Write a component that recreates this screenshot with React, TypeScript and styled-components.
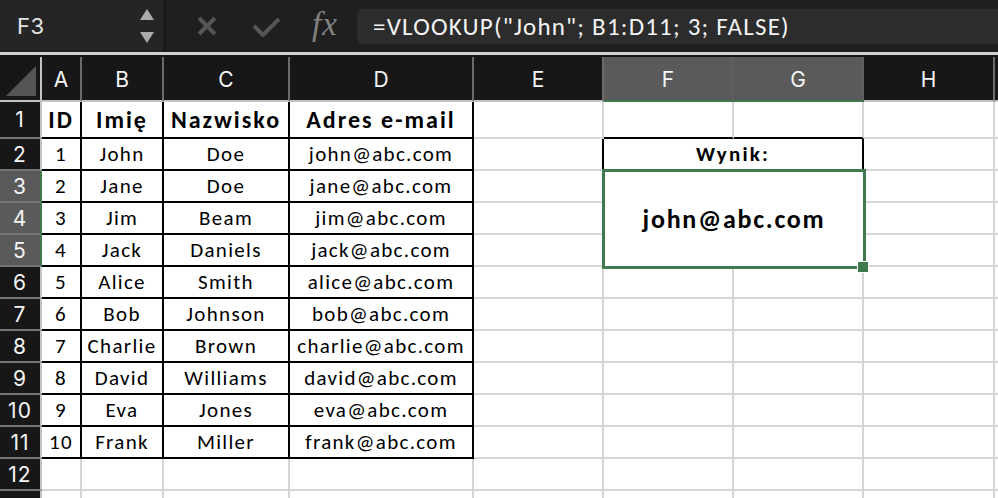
import React from "react";
import styled, { createGlobalStyle } from "styled-components";

const GlobalStyle = createGlobalStyle`
  html, body { margin: 0; padding: 0; background: #ffffff; }
  body { overflow: hidden; }
  * { box-sizing: border-box; }
`;

const CELL_FONT = `"Carlito", "Lato", "Liberation Sans", sans-serif`;
const UI_FONT = `"Inter", "Open Sans", "Liberation Sans", sans-serif`;
const GREEN = "#3e7a4e";
const GRID = "#d5d5d5";

const Page = styled.div`
  width: 998px;
  height: 498px;
  overflow: hidden;
  display: flex;
  flex-direction: column;
  background: #ffffff;
`;

const TopBar = styled.div`
  height: 52px;
  flex: none;
  display: flex;
  align-items: stretch;
  background: #1f1f1f;
`;

const NameBox = styled.div`
  width: 166px;
  flex: none;
  display: flex;
  align-items: center;
  justify-content: space-between;
  padding: 0 9px 0 17px;
  background: #252525;
  border-right: 3px solid #1a1a1a;
`;

const NameText = styled.span`
  font-family: ${UI_FONT};
  font-size: 22px;
  color: #e4e4e4;
  letter-spacing: 0.5px;
`;

const Spinner = styled.div`
  display: flex;
  flex-direction: column;
  align-items: center;
  gap: 12px;
`;

const Arrow = styled.span<{ $dir: "up" | "down" }>`
  width: 0;
  height: 0;
  border-left: 7px solid transparent;
  border-right: 7px solid transparent;
  ${(p) => (p.$dir === "up" ? "border-bottom: 11px solid #ababab;" : "border-top: 11px solid #ababab;")}
`;

const Actions = styled.div`
  width: 191px;
  flex: none;
  display: flex;
  align-items: center;
`;

const IconSlot = styled.span<{ $ml: number }>`
  display: flex;
  align-items: center;
  margin-left: ${(p) => p.$ml}px;
`;

const Fx = styled.span`
  font-family: "Liberation Serif", "DejaVu Serif", serif;
  font-style: italic;
  font-size: 33px;
  letter-spacing: 1px;
  color: #828282;
  line-height: 1;
  margin-left: 31px;
  margin-top: -4px;
`;

const FormulaBox = styled.div`
  flex: 1;
  margin: 9px 0 8px 0;
  background: #2c2c2c;
  border-radius: 5px 0 0 5px;
  display: flex;
  align-items: center;
  padding-left: 16px;
  font-family: ${CELL_FONT};
  font-size: 25px;
  letter-spacing: 1.2px;
  color: #f3f3f3;
  white-space: nowrap;
`;

const Divider = styled.div`
  height: 5px;
  flex: none;
  background: #d2d2d2;
  border-bottom: 2px solid #151515;
`;

const Sheet = styled.div`
  display: grid;
  grid-template-columns: 42px 40px 82px 126px 184px 130px 130px 130px 131px 130px;
  grid-template-rows: 45px 37px repeat(12, 32px);
  flex: none;
`;

const Corner = styled.div`
  background: #171717;
  border-right: 2px solid #c4c4c4;
  border-bottom: 2px solid #c4c4c4;
  display: flex;
  align-items: flex-end;
  justify-content: flex-end;
  padding: 0 4px 4px 0;
`;

const CornerTriangle = styled.span`
  width: 0;
  height: 0;
  border-left: 30px solid transparent;
  border-bottom: 30px solid #565656;
`;

const ColHead = styled.div<{ $selected?: boolean }>`
  background: ${(p) => (p.$selected ? "#5a5a5a" : "#171717")};
  border-right: 2px solid ${(p) => (p.$selected ? "#5e5e5e" : "#6b6b6b")};
  border-bottom: 2px solid ${(p) => (p.$selected ? GREEN : "#c4c4c4")};
  color: #f5f5f5;
  font-family: ${UI_FONT};
  font-size: 21px;
  display: flex;
  align-items: center;
  justify-content: center;
  padding-top: 2px;
`;

const RowHead = styled.div<{ $selected?: boolean }>`
  background: ${(p) => (p.$selected ? "#5a5a5a" : "#171717")};
  border-bottom: 2px solid #747474;
  border-right: 2px solid ${(p) => (p.$selected ? GREEN : "#c4c4c4")};
  color: #f5f5f5;
  font-family: ${UI_FONT};
  font-size: 21px;
  letter-spacing: 1px;
  display: flex;
  align-items: center;
  justify-content: center;
`;

const Cell = styled.div<{
  $right: string;
  $bottom: string;
  $bold?: boolean;
  $size?: number;
  $ls?: number;
  $span?: number;
}>`
  background: #ffffff;
  border-right: 2px solid ${(p) => p.$right};
  border-bottom: 2px solid ${(p) => p.$bottom};
  font-family: ${CELL_FONT};
  font-size: ${(p) => p.$size ?? 21}px;
  font-weight: ${(p) => (p.$bold ? 700 : 400)};
  letter-spacing: ${(p) => p.$ls ?? 1.3}px;
  color: #000000;
  display: flex;
  align-items: center;
  justify-content: center;
  white-space: nowrap;
  ${(p) => (p.$span ? `grid-column: span ${p.$span};` : "")}
`;

const ActiveCell = styled(Cell)`
  grid-column: span 2;
  grid-row: span 3;
  position: relative;
  z-index: 2;
  border: 1px solid ${GREEN};
  box-shadow: 0 0 0 2px ${GREEN};
`;

const FillHandle = styled.span`
  position: absolute;
  right: -6px;
  bottom: -7px;
  width: 12px;
  height: 12px;
  background: ${GREEN};
  border: 1px solid #ffffff;
`;

const COLS = ["A", "B", "C", "D", "E", "F", "G", "H", "I"];
const VISIBLE_COLS = 8;

const TABLE: string[][] = [
  ["ID", "Imię", "Nazwisko", "Adres e-mail"],
  ["1", "John", "Doe", "john@abc.com"],
  ["2", "Jane", "Doe", "jane@abc.com"],
  ["3", "Jim", "Beam", "jim@abc.com"],
  ["4", "Jack", "Daniels", "jack@abc.com"],
  ["5", "Alice", "Smith", "alice@abc.com"],
  ["6", "Bob", "Johnson", "bob@abc.com"],
  ["7", "Charlie", "Brown", "charlie@abc.com"],
  ["8", "David", "Williams", "david@abc.com"],
  ["9", "Eva", "Jones", "eva@abc.com"],
  ["10", "Frank", "Miller", "frank@abc.com"],
];

type Box = { r1: number; r2: number; c1: number; c2: number };
const BOXES: Box[] = [
  { r1: 1, r2: 11, c1: 0, c2: 3 },
  { r1: 2, r2: 2, c1: 5, c2: 6 },
];

const inBox = (r: number, c: number) =>
  BOXES.some((b) => r >= b.r1 && r <= b.r2 && c >= b.c1 && c <= b.c2);

const SELECTED_COLS = [5, 6];
const SELECTED_ROWS = [3, 4, 5];
const ROW_COUNT = 13;

function XIcon() {
  return (
    <svg width="22" height="20" viewBox="0 0 22 20">
      <path d="M3 2 L19 18 M19 2 L3 18" stroke="#555555" strokeWidth="4" fill="none" />
    </svg>
  );
}

function CheckIcon() {
  return (
    <svg width="29" height="21" viewBox="0 0 29 21">
      <path d="M2 10 L11 19 L27 3" stroke="#555555" strokeWidth="4" fill="none" strokeLinejoin="miter" />
    </svg>
  );
}

function renderRow(r: number) {
  const items: React.ReactNode[] = [];
  items.push(
    <RowHead key={`h${r}`} $selected={SELECTED_ROWS.includes(r)}>
      {r <= 12 ? r : ""}
    </RowHead>
  );
  for (let c = 0; c < COLS.length; c++) {
    const right = inBox(r, c) || inBox(r, c + 1) ? "#000000" : GRID;
    const bottom = inBox(r, c) || inBox(r + 1, c) ? "#000000" : GRID;
    if (r === 2 && c === 5) {
      items.push(
        <Cell key={`${r}-${c}`} $right="#000000" $bottom="#000000" $bold $size={21} $ls={2.2} $span={2}>
          Wynik:
        </Cell>
      );
      c++;
      continue;
    }
    if (r === 3 && c === 5) {
      items.push(
        <ActiveCell key={`${r}-${c}`} $right={GREEN} $bottom={GREEN} $bold $size={26} $ls={1.7}>
          john@abc.com
          <FillHandle />
        </ActiveCell>
      );
      c++;
      continue;
    }
    if ((r === 4 || r === 5) && (c === 5 || c === 6)) continue;
    const text = r <= 11 && c <= 3 ? TABLE[r - 1][c] : "";
    const header = r === 1;
    items.push(
      <Cell
        key={`${r}-${c}`}
        $right={right}
        $bottom={bottom}
        $bold={header}
        $size={header ? 24 : 21}
        $ls={header ? 2 : 1.3}
      >
        {text}
      </Cell>
    );
  }
  return items;
}

export default function App() {
  const rows: React.ReactNode[] = [];
  for (let r = 1; r <= ROW_COUNT; r++) rows.push(...renderRow(r));
  return (
    <>
      <GlobalStyle />
      <Page>
        <TopBar>
          <NameBox>
            <NameText>F3</NameText>
            <Spinner>
              <Arrow $dir="up" />
              <Arrow $dir="down" />
            </Spinner>
          </NameBox>
          <Actions>
            <IconSlot $ml={30}>
              <XIcon />
            </IconSlot>
            <IconSlot $ml={34}>
              <CheckIcon />
            </IconSlot>
            <Fx>fx</Fx>
          </Actions>
          <FormulaBox>=VLOOKUP("John"; B1:D11; 3; FALSE)</FormulaBox>
        </TopBar>
        <Divider />
        <Sheet>
          <Corner>
            <CornerTriangle />
          </Corner>
          {COLS.map((c, i) => (
            <ColHead key={c} $selected={SELECTED_COLS.includes(i)}>
              {i < VISIBLE_COLS ? c : ""}
            </ColHead>
          ))}
          {rows}
        </Sheet>
      </Page>
    </>
  );
}
